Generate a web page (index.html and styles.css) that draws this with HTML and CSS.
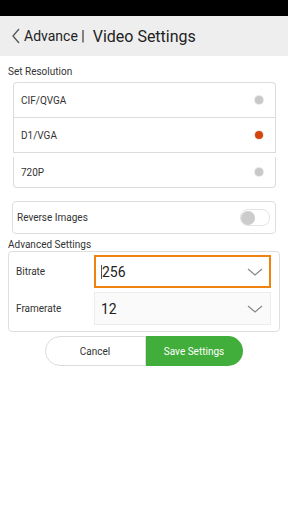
FILE: index.html
```html
<!doctype html>
<html>
<head>
    <meta charset="UTF-8">
    <title>Video Settings</title>
    <link rel="stylesheet" href="styles.css">
</head>
<body>
    <div id="status-bar"></div>
    <div id="page-header">
        <svg class="back" width="10" height="16" viewBox="0 0 10 16"><path d="M8 1 L2 8 L8 15" fill="none" stroke="#555" stroke-width="1.3"/></svg>
        <span class="parent">Advance |</span>
        <span class="title">Video Settings</span>
    </div>

    <div class="section-label">Set Resolution</div>
    <div class="res-group">
        <div class="res-top">
            <div class="row">CIF/QVGA<span class="radio"></span></div>
            <div class="row">D1/VGA<span class="radio on"></span></div>
        </div>
        <div class="res-bottom">
            <div class="row">720P<span class="radio"></span></div>
        </div>
    </div>

    <div class="card toggle-row">
        <span>Reverse Images</span>
        <span class="toggle"><span class="knob"></span></span>
    </div>

    <div class="section-label adv">Advanced Settings</div>
    <div class="card adv-box">
        <div class="field">
            <span class="field-label">Bitrate</span>
            <div class="select focus"><span><i class="caret"></i>256</span>
                <svg width="16" height="10" viewBox="0 0 16 10"><path d="M1 2 L8 8 L15 2" fill="none" stroke="#888" stroke-width="1.2"/></svg>
            </div>
        </div>
        <div class="field">
            <span class="field-label">Framerate</span>
            <div class="select"><span>12</span>
                <svg width="16" height="10" viewBox="0 0 16 10"><path d="M1 2 L8 8 L15 2" fill="none" stroke="#888" stroke-width="1.2"/></svg>
            </div>
        </div>
    </div>

    <div class="buttons">
        <button class="cancel">Cancel</button>
        <button class="save">Save Settings</button>
    </div>
</body>
</html>
```
FILE: styles.css
```css
body {
    font-family: Roboto, "Liberation Sans", sans-serif;
    margin: 0;
    background: #fff;
    color: #222;
    width: 288px;
    height: 512px;
    overflow: hidden;
}
#status-bar {
    height: 16px;
    background: #000;
}
#page-header {
    height: 40px;
    background: #eeeeee;
    display: flex;
    align-items: center;
    padding-left: 11px;
}
#page-header .back {
    margin-right: 3px;
}
.parent {
    font-size: 14px;
    color: #222;
}
.title {
    font-size: 16px;
    margin-left: 8px;
    color: #222;
}
.section-label {
    font-size: 10px;
    color: #333;
    margin: 10px 0 0 8px;
}
.res-group {
    margin: 5px 12px 0 13px;
}
.res-top {
    border: 1px solid #dcdcdc;
    border-bottom: none;
    border-radius: 4px 4px 0 0;
}
.res-top .row {
    border-bottom: 1px solid #dcdcdc;
    height: 34px;
}
.res-bottom {
    margin-top: 4px;
    border: 1px solid #dcdcdc;
    border-top: none;
    border-radius: 0 0 4px 4px;
}
.res-bottom .row {
    height: 30px;
}
.row {
    display: flex;
    align-items: center;
    justify-content: space-between;
    padding: 0 12px 0 7px;
    font-size: 10px;
    color: #333;
}
.radio {
    width: 8px;
    height: 8px;
    border-radius: 50%;
    background: #c8c8c8;
    box-shadow: 0 0 0 1px #e8e8e8;
}
.radio.on {
    background: #d4450c;
}
.card {
    border: 1px solid #dedede;
    border-radius: 4px;
}
.toggle-row {
    margin: 13px 12px 0 12px;
    height: 31px;
    display: flex;
    align-items: center;
    justify-content: space-between;
    padding: 0 5px 0 4px;
    font-size: 10px;
    color: #333;
}
.toggle {
    width: 28px;
    height: 15px;
    border: 1px solid #e4e4e4;
    border-radius: 8px;
    display: flex;
    align-items: center;
}
.knob {
    width: 14px;
    height: 14px;
    border-radius: 50%;
    background: #cccccc;
}
.section-label.adv {
    margin-top: 5px;
}
.adv-box {
    margin: 1px 8px 0 8px;
    padding: 3px 8px 6px 7px;
    display: flex;
    flex-direction: column;
    gap: 4px;
}
.field {
    display: flex;
    align-items: center;
}
.field-label {
    width: 78px;
    font-size: 10px;
    color: #333;
}
.select {
    flex: 1;
    border: 1px solid #ececec;
    background: #fafafa;
    display: flex;
    align-items: center;
    justify-content: space-between;
    padding: 0 7px 0 6px;
    font-size: 14px;
    color: #222;
    box-sizing: border-box;
    height: 33px;
}
.select.focus {
    border: 2px solid #f0820f;
    background: #fff;
    padding-left: 5px;
    padding-right: 6px;
}
.caret {
    display: inline-block;
    width: 1px;
    height: 14px;
    background: #555;
    vertical-align: -2px;
}
.buttons {
    display: flex;
    justify-content: center;
    margin-top: 4px;
    padding-right: 1px;
}
button {
    height: 30px;
    border: none;
    font-family: Roboto, "Liberation Sans", sans-serif;
    font-size: 10px;
    cursor: pointer;
}
.cancel {
    width: 101px;
    background: #fff;
    border: 1px solid #dcdcdc;
    border-radius: 15px 0 0 15px;
    color: #333;
}
.save {
    width: 97px;
    background: #41ad3a;
    color: #fff;
    border-radius: 0 15px 15px 0;
}
```
